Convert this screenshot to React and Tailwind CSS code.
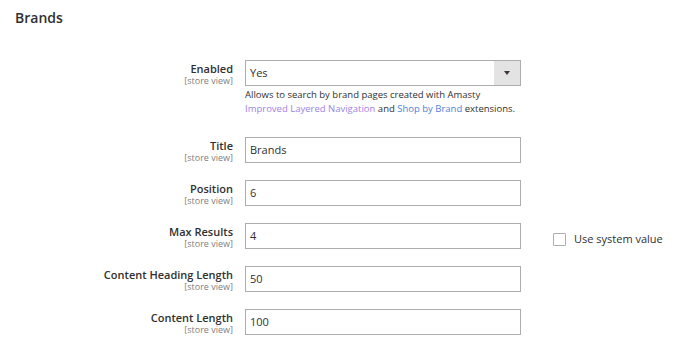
import React from 'react';

const font = { fontFamily: '"Open Sans", "Liberation Sans", sans-serif' };

const Label = ({ text }) => (
    <div className="w-[218px] shrink-0 pt-[2px] text-right">
        <div className="text-[11px] leading-[13px] font-semibold text-[#303030]">{text}</div>
        <div className="text-[9px] leading-[11px] text-[#808080]">[store view]</div>
    </div>
);

const TextField = ({ value }) => (
    <div className="ml-[12px] flex h-[26px] w-[276px] items-center border border-[#adadad] bg-white px-[4px] text-[11px] text-[#303030]">
        {value}
    </div>
);

const Row = ({ label, value, extra }) => (
    <div className="flex items-start">
        <Label text={label} />
        <TextField value={value} />
        {extra}
    </div>
);

const App = () => {
    return (
        <div className="h-[347px] w-[677px] bg-white" style={font}>
            <div className="px-[15px] pt-[8px]">
                <h2 className="text-[14px] leading-[20px] font-semibold text-[#303030]">Brands</h2>
            </div>
            <div className="mt-[32px] flex flex-col gap-[17px] pl-[15px]">
                <div className="flex items-start">
                    <Label text="Enabled" />
                    <div className="ml-[12px] w-[276px]">
                        <div className="flex h-[26px] items-center border border-[#adadad] bg-white text-[11px] text-[#303030]">
                            <span className="flex-1 px-[4px]">Yes</span>
                            <span className="flex h-full w-[26px] items-center justify-center bg-[#e3e3e3]">
                                <span className="h-0 w-0 border-x-[3px] border-t-[4px] border-x-transparent border-t-[#41362f]" />
                            </span>
                        </div>
                        <p className="mt-[2px] mb-[4px] text-[9.5px] leading-[14px] text-[#303030]">
                            Allows to search by brand pages created with Amasty{' '}
                            <span className="text-[#9d84e4]">Improved Layered Navigation</span> and{' '}
                            <span className="text-[#4f7fd6]">Shop by Brand</span> extensions.
                        </p>
                    </div>
                </div>
                <Row label="Title" value="Brands" />
                <Row label="Position" value="6" />
                <Row
                    label="Max Results"
                    value="4"
                    extra={
                        <label className="ml-[32px] mt-[9px] flex items-center gap-[8px] text-[11px] leading-[14px] text-[#303030]">
                            <span className="h-[13px] w-[13px] rounded-[1px] border border-[#adadad] bg-white" />
                            Use system value
                        </label>
                    }
                />
                <Row label="Content Heading Length" value="50" />
                <Row label="Content Length" value="100" />
            </div>
        </div>
    );
};

export default App;
